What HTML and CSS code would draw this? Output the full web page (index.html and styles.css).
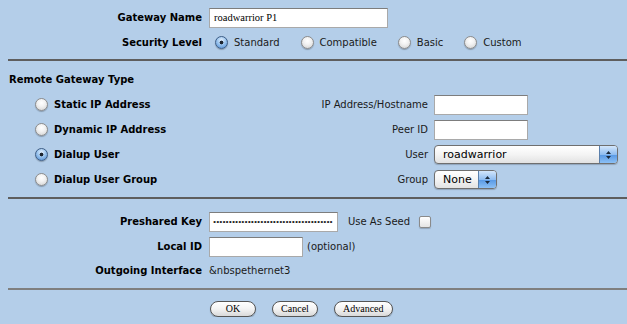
FILE: index.html
```html
<!DOCTYPE html>
<html lang="en">
<head>
  <meta charset="UTF-8">
  <title>Phase 1 Gateway</title>
  <link rel="stylesheet" href="styles.css">
</head>
<body>
  <div class="form">
    <div class="pairs">
      <span class="lbl">Gateway Name</span>
      <div><input type="text" class="field name-field" value="roadwarrior P1"></div>
      <span class="lbl">Security Level</span>
      <div class="options">
        <label class="opt"><input type="radio" name="level" checked> Standard</label>
        <label class="opt"><input type="radio" name="level"> Compatible</label>
        <label class="opt"><input type="radio" name="level"> Basic</label>
        <label class="opt"><input type="radio" name="level"> Custom</label>
      </div>
    </div>

    <div class="rule"></div>

    <div class="section-title">Remote Gateway Type</div>
    <div class="remote">
      <label class="type"><input type="radio" name="type"> Static IP Address</label>
      <span class="side-lbl">IP Address/Hostname</span>
      <div><input type="text" class="field short-field"></div>

      <label class="type"><input type="radio" name="type"> Dynamic IP Address</label>
      <span class="side-lbl">Peer ID</span>
      <div><input type="text" class="field short-field"></div>

      <label class="type"><input type="radio" name="type" checked> Dialup User</label>
      <span class="side-lbl">User</span>
      <div class="popup user-popup"><span class="popup-value">roadwarrior</span><span class="popup-arrows"><svg width="7" height="10" viewBox="0 0 7 10"><path d="M3.5 1 L6 4 L1 4 Z M1 6 L6 6 L3.5 9 Z" fill="#1b2a3d"/></svg></span></div>

      <label class="type"><input type="radio" name="type"> Dialup User Group</label>
      <span class="side-lbl">Group</span>
      <div class="popup group-popup"><span class="popup-value">None</span><span class="popup-arrows"><svg width="7" height="10" viewBox="0 0 7 10"><path d="M3.5 1 L6 4 L1 4 Z M1 6 L6 6 L3.5 9 Z" fill="#1b2a3d"/></svg></span></div>
    </div>

    <div class="rule"></div>

    <div class="pairs lower">
      <span class="lbl">Preshared Key</span>
      <div class="inline">
        <input type="text" class="field key-field" value="••••••••••••••••••••••••••••••••••••••" readonly>
        <span class="seed">Use As Seed</span>
        <input type="checkbox" class="check">
      </div>
      <span class="lbl">Local ID</span>
      <div class="inline">
        <input type="text" class="field local-field">
        <span class="hint">(optional)</span>
      </div>
      <span class="lbl">Outgoing Interface</span>
      <div>&amp;nbspethernet3</div>
    </div>

    <div class="rule light"></div>

    <div class="buttons">
      <button class="btn">OK</button>
      <button class="btn">Cancel</button>
      <button class="btn">Advanced</button>
    </div>
  </div>
</body>
</html>
```

FILE: styles.css
```css
body {
  margin: 0;
  padding: 0;
  background: #b4cee9;
  font-family: "DejaVu Sans", Verdana, sans-serif;
  font-size: 10px;
  color: #1a1a1a;
}
.form {
  padding-top: 5px;
}
.pairs {
  display: grid;
  grid-template-columns: 194px 1fr;
  grid-auto-rows: 25px;
  column-gap: 7px;
  align-items: center;
  padding-left: 8px;
}
.pairs.lower {
  margin-top: 10px;
  grid-template-rows: 25px 25px 23px;
}
.lbl {
  font-weight: bold;
  color: #000;
  text-align: right;
}
.field {
  box-sizing: border-box;
  height: 20px;
  margin: 0;
  padding: 0 4px;
  background: #fff;
  border: 1px solid #a9a9a9;
  border-top-color: #7d7d7d;
  border-radius: 0;
  outline: none;
}
.name-field {
  width: 179px;
  font-family: "Liberation Serif", "Times New Roman", serif;
  font-size: 10.5px;
  color: #000;
}
.short-field {
  width: 94px;
}
.key-field {
  width: 129px;
  font-family: "Liberation Serif", "Times New Roman", serif;
  font-size: 9px;
  color: #222;
  padding: 0 3px;
}
.local-field {
  width: 94px;
}
.options {
  display: flex;
  align-items: center;
  gap: 21px;
  padding-left: 6px;
}
.opt, .type {
  display: flex;
  align-items: center;
  gap: 6px;
}
input[type="radio"] {
  appearance: none;
  -webkit-appearance: none;
  box-sizing: border-box;
  width: 13px;
  height: 13px;
  margin: 0;
  border-radius: 50%;
  border: 1px solid #8c8c8c;
  background: radial-gradient(circle at 50% 35%, #ffffff 0%, #f2f2f2 40%, #cfcfcf 100%);
  box-shadow: 0 1px 1px rgba(0, 0, 0, 0.25);
}
input[type="radio"]:checked {
  border-color: #3e5e86;
  background:
    radial-gradient(circle, #1d2530 0, #1d2530 1.6px, transparent 2.2px),
    radial-gradient(circle at 50% 30%, #e4f0fc 0%, #9cc5ee 45%, #4d8ad2 100%);
}
.rule {
  margin: 4px 0 0 8px;
  border-top: 2px solid #5e5e5e;
}
.section-title {
  margin-top: 6px;
  padding-left: 9px;
  line-height: 25px;
  font-weight: bold;
  color: #000;
}
.remote {
  display: grid;
  grid-template-columns: 280px 134px auto;
  grid-auto-rows: 25px;
  column-gap: 6px;
  align-items: center;
  padding-left: 8px;
  margin-bottom: 1px;
}
.remote + .rule {
  margin-top: 5px;
}
.type {
  padding-left: 27px;
  font-weight: bold;
  color: #000;
}
.side-lbl {
  text-align: right;
}
.popup {
  box-sizing: border-box;
  display: flex;
  align-items: center;
  height: 19px;
  border: 1px solid #6f6f6f;
  border-radius: 4px;
  background: linear-gradient(#ffffff, #f4f4f4 50%, #e2e2e2);
  box-shadow: 0 1px 1px rgba(0, 0, 0, 0.2);
  overflow: hidden;
  font-size: 11px;
  color: #000;
}
.user-popup {
  width: 184px;
}
.group-popup {
  width: 63px;
}
.popup-value {
  flex: 1;
  padding-left: 8px;
}
.popup-arrows {
  width: 17px;
  height: 100%;
  display: flex;
  align-items: center;
  justify-content: center;
  border-left: 1px solid #5a7fab;
  background: linear-gradient(#d3e6fb, #8fbdf1 50%, #5b9be6 55%, #8cc0f5);
}
.inline {
  display: flex;
  align-items: center;
}
.seed {
  margin-left: 10px;
}
.check {
  appearance: none;
  -webkit-appearance: none;
  box-sizing: border-box;
  width: 12px;
  height: 12px;
  margin: 0 0 0 9px;
  border: 1px solid #8a8a8a;
  border-radius: 2px;
  background: linear-gradient(#ffffff, #e4e4e4);
  box-shadow: 0 1px 1px rgba(0, 0, 0, 0.2);
}
.hint {
  margin-left: 4px;
}
.rule.light {
  margin-top: 6px;
  border-top-color: #7f7f7f;
}
.buttons {
  display: flex;
  gap: 16px;
  margin-top: 11px;
  padding-left: 210px;
}
.btn {
  box-sizing: border-box;
  min-width: 46px;
  height: 16px;
  padding: 0 8px;
  border: 1px solid #555;
  border-radius: 8px;
  background: linear-gradient(#ffffff, #f3f3f3 50%, #d9d9d9);
  box-shadow: 0 1px 1px rgba(0, 0, 0, 0.25);
  font-family: "Liberation Serif", "Times New Roman", serif;
  font-size: 10px;
  line-height: 14px;
  color: #000;
}
```
